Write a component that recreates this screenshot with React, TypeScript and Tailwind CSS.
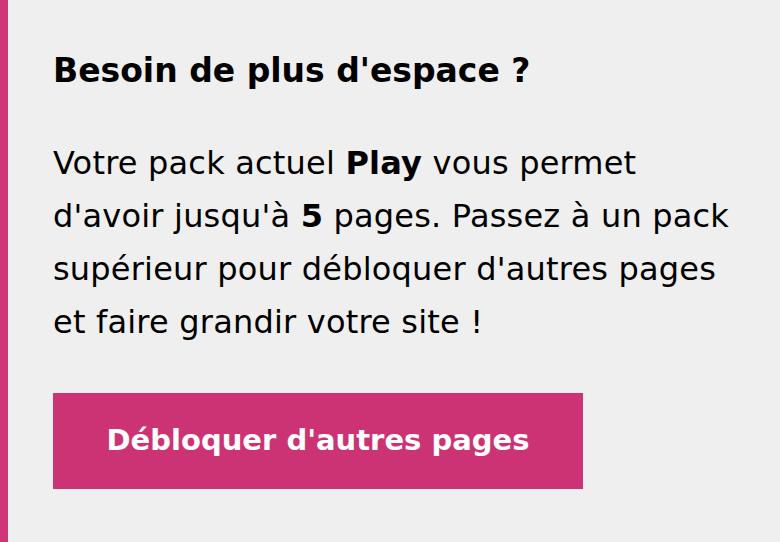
export default function App() {
  return (
    <div className="flex h-[542px] w-[780px] bg-[#efefef] font-['DejaVu_Sans',sans-serif] text-black">
      <div className="w-2 shrink-0 bg-[#d0357a]" />
      <div className="flex flex-col pl-[45px] pt-[51px]">
        <h2 className="text-[33px] font-bold leading-[40px]">Besoin de plus d'espace ?</h2>
        <p className="mt-[46px] w-[720px] text-[32px] leading-[53px] tracking-[0.2px]">
          Votre pack actuel <strong className="font-bold">Play</strong> vous permet
          <br />
          d'avoir jusqu'à <strong className="font-bold">5</strong> pages. Passez à un pack
          <br />
          supérieur pour débloquer d'autres pages
          <br />
          et faire grandir votre site !
        </p>
        <button className="mt-[44px] h-[96px] w-[530px] bg-[#cc3374] text-[29px] font-bold text-white">
          Débloquer d'autres pages
        </button>
      </div>
    </div>
  );
}
